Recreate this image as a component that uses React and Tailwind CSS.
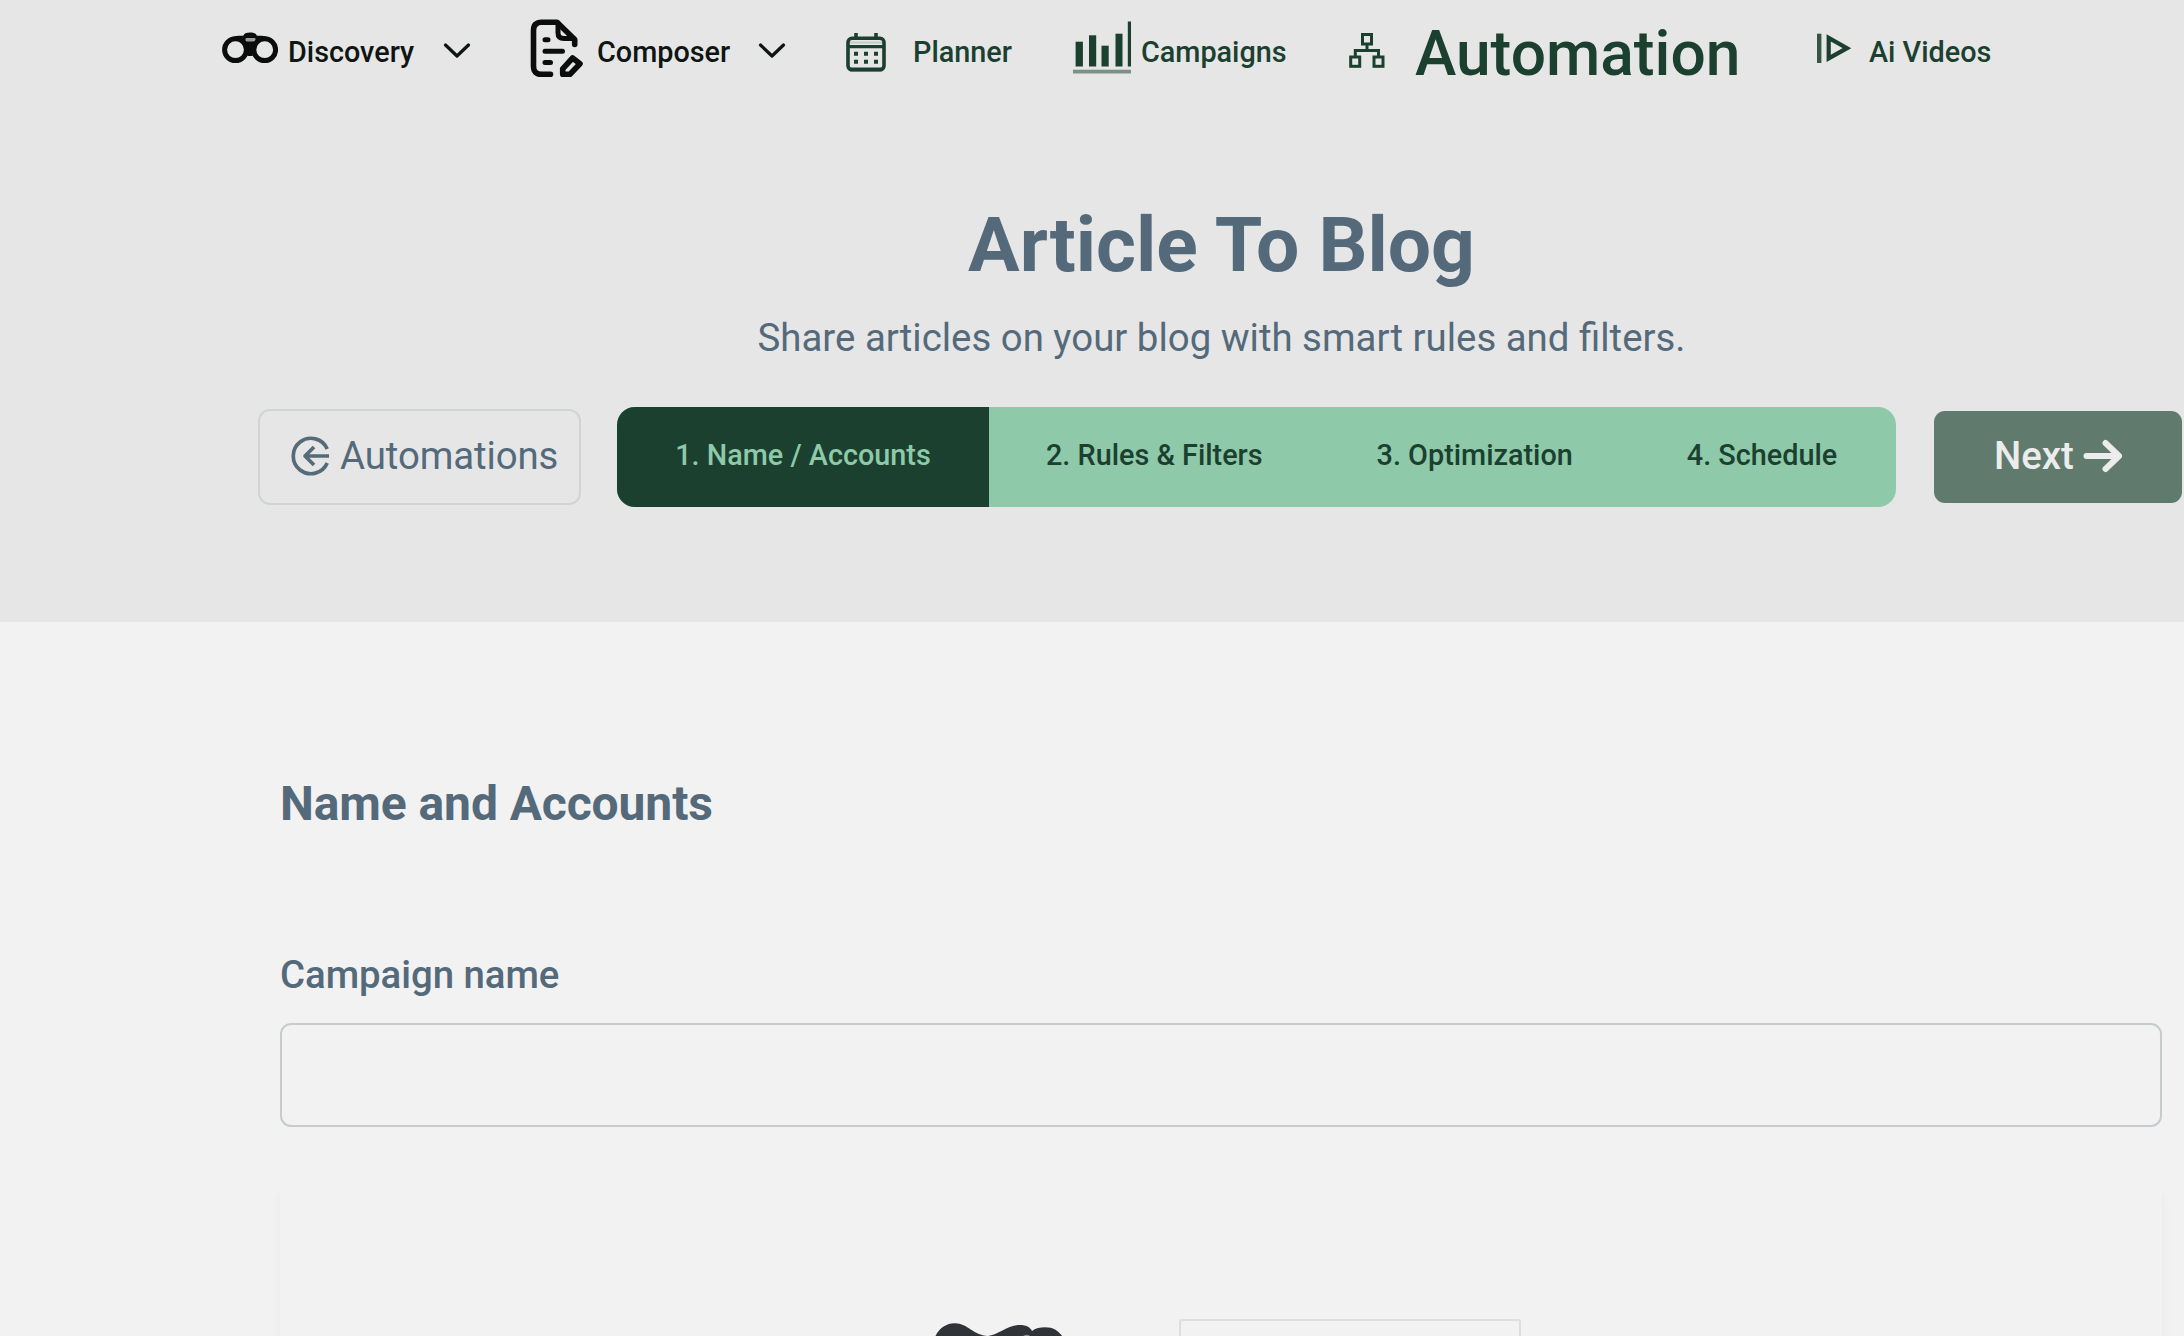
function BinocularsIcon() {
  return (
    <svg className="mt-8 h-8 w-14 shrink-0" viewBox="0 0 56 32" fill="none">
      <path d="M12 4.500C16 3 19 4 21.500 3.500C22 1.500 24 .500 28 .500s6.200 1 6.700 3C37 4 40 3 44 4.500L33 13l-2.500 11h-5L23 13z" fill="#0b0d0c" />
      <rect x="23.500" y="6" width="10" height="3.500" rx="1" fill="#9b9d9c" />
      <circle cx="13.500" cy="17.700" r="10.900" stroke="#0b0d0c" strokeWidth="5" fill="#e6e6e6" />
      <circle cx="42.700" cy="17.700" r="10.900" stroke="#0b0d0c" strokeWidth="5" fill="#e6e6e6" />
    </svg>
  );
}

function DocumentEditIcon() {
  return (
    <svg
      className="mt-[19px] h-[59px] w-[54px] shrink-0"
      viewBox="0 0 54 59"
      fill="none"
      stroke="#0b0d0c"
      strokeWidth="5.600"
      strokeLinecap="round"
      strokeLinejoin="round"
    >
      <path d="M20.500 55.300H11.500Q3.500 55.300 3.500 47V11.500Q3.500 3.200 11.500 3.200H27L44.700 20.500V25.500" />
      <path d="M28 4V14Q28 19.500 34 19.500H43" strokeWidth="5" />
      <path d="M15 20.700H18M15 32.200H32.500M15 43.500H20.500" strokeWidth="5" />
      <path d="M42.600 39L50 44.800L40 55.300H32.700V49.800Z" />
    </svg>
  );
}

function ChevronIcon() {
  return (
    <svg className="mt-[42px] h-4 w-7 shrink-0" viewBox="0 0 28 16" fill="none" stroke="#0f1512" strokeWidth="3.200" strokeLinecap="round" strokeLinejoin="round">
      <path d="M2.500 3L14 14L25.500 3" />
    </svg>
  );
}

function CalendarIcon() {
  return (
    <svg className="mt-8 h-10 w-10 shrink-0" viewBox="0 0 40 40" fill="none" stroke="#1b402f">
      <rect x="2" y="6.300" width="36" height="31.500" rx="4" strokeWidth="3.600" />
      <path d="M10 1V6M30 1V6" strokeWidth="3.600" />
      <path d="M3 14.600H37" strokeWidth="3.200" />
      <path d="M4 37.400H36" strokeWidth="3.800" />
      <path d="M4 10.500H36" stroke="#c3cbc7" strokeWidth="2" />
      <path d="M8 21.700h4m6 0h4m6 0h4M8 29.700h4m6 0h4m6 0h4" strokeWidth="4" />
    </svg>
  );
}

function BarsIcon() {
  return (
    <svg className="mt-[21px] h-[53px] w-[58px] shrink-0" viewBox="0 0 58 53" fill="#1b402f">
      <rect x="2.600" y="20.700" width="7.300" height="24.800" />
      <rect x="16" y="14.300" width="7.200" height="31.200" />
      <rect x="28.500" y="24.700" width="7.200" height="20.800" />
      <rect x="42.500" y="12.700" width="7" height="32.800" />
      <rect x="54.800" y=".500" width="3.200" height="45" />
      <rect x="0" y="48.700" width="58" height="3.800" fill="#7b9188" />
    </svg>
  );
}

function OrgChartIcon() {
  return (
    <svg className="mt-8 h-9 w-9 shrink-0" viewBox="0 0 36 36" fill="none" stroke="#1b402f" strokeWidth="3">
      <rect x="13.500" y="2.500" width="9" height="9.500" />
      <rect x="1.700" y="25" width="9" height="9.300" />
      <rect x="25" y="25" width="9" height="9.300" />
      <path d="M18 12V18.500M6.300 25V18.500H29.500V25" />
    </svg>
  );
}

function PlayIcon() {
  return (
    <svg className="mt-[33px] h-[31px] w-9 shrink-0" viewBox="0 0 36 31" fill="none">
      <path d="M3.200 .700V30" stroke="#355645" strokeWidth="4.400" />
      <path d="M12.700 4.800V25.400L31 15.200Z" stroke="#1b402f" strokeWidth="4.200" />
    </svg>
  );
}

function BackIcon() {
  return (
    <svg className="h-10 w-10 shrink-0" viewBox="0 0 40 40" fill="none" stroke="#556b7a" strokeWidth="3.700">
      <path d="M36.200 13A17.700 17.700 0 1 0 36.200 27" />
      <path d="M38 20H14M23 11L14 20L23 29" strokeLinejoin="round" />
    </svg>
  );
}

function NextIcon() {
  return (
    <svg className="h-9 w-10 shrink-0" viewBox="0 0 40 36" fill="none" stroke="#ececec" strokeWidth="6" strokeLinecap="round" strokeLinejoin="round">
      <path d="M3.500 18H36M22.500 5L36 18L22.500 31" />
    </svg>
  );
}

const label = "shrink-0 whitespace-nowrap text-[28.800px] leading-[34px] font-medium pt-[35px]";

function TopNav() {
  return (
    <nav className="flex h-[104px] items-start pl-[222px] text-[#1b402f]">
      <BinocularsIcon />
      <span className={label + " w-[165px] pl-[10px] text-[#0f1512]"}>Discovery</span>
      <ChevronIcon />
      <div className="w-[59px] shrink-0" />
      <DocumentEditIcon />
      <span className={label + " w-[174px] pl-[13px] text-[#0f1512]"}>Composer</span>
      <ChevronIcon />
      <div className="w-[60px] shrink-0" />
      <CalendarIcon />
      <span className={label + " w-[187px] pl-[27px]"}>Planner</span>
      <BarsIcon />
      <span className={label + " w-[218px] pl-[10px]"}>Campaigns</span>
      <OrgChartIcon />
      <span className="w-[431px] shrink-0 pt-[18px] pl-[30px] text-[62.300px] leading-[72px] font-medium whitespace-nowrap">
        Automation
      </span>
      <PlayIcon />
      <span className={label + " pl-[17px]"}>Ai Videos</span>
    </nav>
  );
}

const steps = ["2. Rules & Filters", "3. Optimization", "4. Schedule"];

function Stepper() {
  return (
    <ol className="flex h-[100px] w-[1279px] overflow-hidden rounded-[18px] bg-[#8ec9a9] text-[28.800px] leading-[34px] font-medium whitespace-nowrap text-[#1b402f]">
      <li className="flex w-[372px] shrink-0 items-center justify-center bg-[#1b402f] pb-[5px] text-[#8ec9a9]">1. Name / Accounts</li>
      {steps.map((step) => (
        <li key={step} className="flex shrink-0 items-center px-[57px] pb-[5px]">
          {step}
        </li>
      ))}
    </ol>
  );
}

export default function App() {
  return (
    <div className="h-[1336px] w-[2184px] overflow-hidden bg-[#f2f2f2] font-['Roboto',sans-serif] text-[#546a7b]">
      <header className="h-[622px] bg-[#e6e6e6]">
        <TopNav />
        <div className="flex flex-col items-center pt-[96px] pl-[259px]">
          <h1 className="text-[76.800px] leading-[90px] font-bold">Article To Blog</h1>
          <p className="mt-[25px] text-[38.400px] leading-[45px]">Share articles on your blog with smart rules and filters.</p>
        </div>
        <div className="mt-[47px] flex items-center pl-[258px]">
          <button className="flex h-[96px] w-[323px] items-center rounded-[12px] border-2 border-[#d0d4d3] pb-0.5 pl-[31px]">
            <BackIcon />
            <span className="ml-[9px] pb-0.5 text-[38.400px] leading-[45px] tracking-[-0.1px]">Automations</span>
          </button>
          <div className="ml-9">
            <Stepper />
          </div>
          <button className="ml-[38px] flex h-[92px] w-[248px] items-center rounded-[11px] bg-[#607a6e] pb-0.5 pl-[60px] text-[#ececec]">
            <span className="pb-0.5 text-[38.400px] leading-[45px] font-medium">Next</span>
            <span className="ml-[9px]">
              <NextIcon />
            </span>
          </button>
        </div>
      </header>
      <main className="pt-[154px] pl-[280px]">
        <h2 className="text-[48px] leading-[56px] font-bold tracking-[-0.1px]">Name and Accounts</h2>
        <label className="mt-[120px] block text-[38.400px] leading-[45px] font-medium tracking-[-0.05px]">Campaign name</label>
        <input className="mt-[26px] block h-[104px] w-[1882px] rounded-[11px] border-2 border-[#c6cccd] bg-transparent px-6 outline-none" />
        <section className="mt-[57px] flex h-[400px] w-[1882px] items-start rounded-[8px] bg-[#f2f2f2] pt-[135px] pl-[655px] shadow-[0_8px_12px_rgba(60,50,30,0.045)]">
          <svg className="mt-[3px] h-[60px] w-[130px] shrink-0" viewBox="0 0 130 60" fill="#303337">
            <path d="M0 15C4 6 12 1 20 1.300C33 1.300 38 13.500 53 14C62 13.500 73 3 85 3C91 3 95 5 97 9C101 6 105 5.300 110 5.300C119 5.300 123 9 128 15V60H0Z" />
            <path d="M88 14q4 -2.500 7 0z" fill="#8d9092" />
          </svg>
          <div className="ml-[114px] h-[200px] w-[342px] rounded-[3px] border-2 border-[#dedede]" />
        </section>
      </main>
    </div>
  );
}
